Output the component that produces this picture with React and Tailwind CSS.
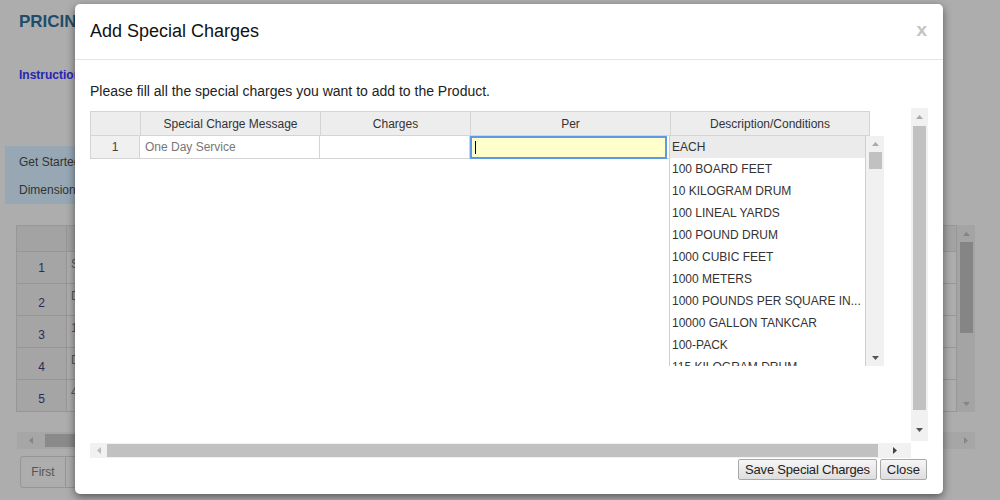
import React from "react";

const Up = ({ c = "#777" }) => (
  <svg width="7" height="4" viewBox="0 0 7 4"><path d="M0 4 L3.5 0 L7 4 Z" fill={c} /></svg>
);
const Down = ({ c = "#555" }) => (
  <svg width="7" height="4" viewBox="0 0 7 4"><path d="M0 0 L3.5 4 L7 0 Z" fill={c} /></svg>
);
const Left = ({ c = "#bbb" }) => (
  <svg width="4" height="7" viewBox="0 0 4 7"><path d="M4 0 L0 3.5 L4 7 Z" fill={c} /></svg>
);
const Right = ({ c = "#444" }) => (
  <svg width="4" height="7" viewBox="0 0 4 7"><path d="M0 0 L4 3.5 L0 7 Z" fill={c} /></svg>
);

const items = [
  "EACH",
  "100 BOARD FEET",
  "10 KILOGRAM DRUM",
  "100 LINEAL YARDS",
  "100 POUND DRUM",
  "1000 CUBIC FEET",
  "1000 METERS",
  "1000 POUNDS PER SQUARE IN...",
  "10000 GALLON TANKCAR",
  "100-PACK",
  "115 KILOGRAM DRUM",
];

const bgRows = [
  ["1", "Same Day Service"],
  ["2", "Delivery"],
  ["3", "1 Hour Service"],
  ["4", "Drop Ship"],
  ["5", "48 Hour Service"],
];

export default function App() {
  return (
    <div
      className="relative w-[1000px] h-[500px] overflow-hidden bg-[#adadad] text-[#333]"
      style={{ fontFamily: '"Liberation Sans", Arial, sans-serif' }}
    >
      {/* Background page (under overlay) */}
      <div className="flex flex-col">
        <div className="pl-[19px] pt-[12px] h-[20px] box-content text-[17px] font-bold text-[#1e4d6b] leading-[20px]">PRICING</div>
        <div className="pl-[19px] mt-[35px] text-[12px] font-bold text-[#2626b3] leading-[16px]">Instructions</div>
        <div className="ml-[5px] mt-[63px] w-[200px] h-[58px] bg-[#97a8b4] flex flex-col text-[12px] text-[#333] pl-[14px]">
          <div className="h-[29px] flex items-center pt-[2px]">Get Started</div>
          <div className="h-[29px] flex items-center">Dimensions</div>
        </div>
        <div className="flex mt-[21px] ml-[16px] w-[959px]">
          <div className="flex-1 border border-[#979797] h-[187px] flex flex-col">
            <div className="flex h-[26px] bg-[#a3a3a3] border-b border-[#979797]">
              <div className="w-[50px] border-r border-[#979797]"></div>
              <div className="flex-1"></div>
            </div>
            {bgRows.map(([n, t], i) => (
              <div key={n} className="flex flex-1 border-b border-[#979797] last:border-b-0">
                <div className={`w-[50px] border-r border-[#979797] bg-[#a5a5a5] flex justify-center text-[12px] text-[#2a2a5a] ${i === 0 ? "items-center" : "items-end pb-[3px]"}`}>{n}</div>
                <div className="flex-1 pl-[4px] pt-[3px] text-[12px] text-[#555]">{t}</div>
              </div>
            ))}
          </div>
          <div className="w-[18px] h-[187px] bg-[#a4a4a4] flex flex-col items-center">
            <div className="h-[17px] flex items-center"><Up c="#858585" /></div>
            <div className="w-[13px] h-[91px] bg-[#858585]"></div>
            <div className="flex-1"></div>
            <div className="h-[17px] flex items-center"><Down c="#858585" /></div>
          </div>
        </div>
        <div className="ml-[17px] mt-[20px] w-[958px] h-[17px] bg-[#a6a6a6] flex items-center">
          <div className="w-[28px] flex justify-center"><Left c="#858585" /></div>
          <div className="h-[13px] w-[120px] bg-[#8a8a8a]"></div>
          <div className="flex-1"></div>
          <div className="w-[18px] flex justify-center"><Right c="#858585" /></div>
        </div>
        <div className="ml-[20px] mt-[7px] flex">
          <div className="w-[46px] h-[32px] border border-[#959595] rounded-l-[3px] flex items-center justify-center text-[12px] text-[#555]">First</div>
          <div className="w-[40px] h-[32px] border border-l-0 border-[#959595]"></div>
        </div>
      </div>

      {/* Modal */}
      <div className="absolute left-[75px] top-[4px] w-[868px] h-[490px] bg-white rounded-[5px] shadow-[0_3px_9px_rgba(0,0,0,0.5)] flex flex-col">
        <div className="h-[56px] flex items-center justify-between px-[15px] border-b border-[#e5e5e5]">
          <div className="text-[18px] text-[#111] leading-[20px] -mt-[2px]">Add Special Charges</div>
          <div className="text-[19px] font-bold text-[#c4c4c4] pr-[1px] leading-[20px] -mt-[4px]">x</div>
        </div>
        <div className="pl-[15px] pr-[15px] flex flex-col">
          <div className="mt-[23px] text-[14px] leading-[16px] text-[#222]">Please fill all the special charges you want to add to the Product.</div>
          <div className="mt-[9px] w-[838px] h-[350px] flex flex-col">
            <div className="flex h-[333px]">
              <div className="w-[821px] pt-[3px] relative">
                <div className="w-[780px] text-[12px]">
                  <div className="flex h-[25px] bg-[#ededed] border border-[#d4d4d4]">
                    <div className="w-[50px] border-r border-[#d4d4d4]"></div>
                    <div className="w-[180px] border-r border-[#d4d4d4] flex items-center justify-center">Special Charge Message</div>
                    <div className="w-[150px] border-r border-[#d4d4d4] flex items-center justify-center">Charges</div>
                    <div className="w-[200px] border-r border-[#d4d4d4] flex items-center justify-center">Per</div>
                    <div className="flex-1 flex items-center justify-center">Description/Conditions</div>
                  </div>
                  <div className="flex h-[23px] border-b border-l border-[#d4d4d4] w-[580px]">
                    <div className="w-[49px] bg-[#f0f0f0] border-r border-[#d4d4d4] flex items-center justify-center text-[#444]">1</div>
                    <div className="w-[180px] border-r border-[#d4d4d4] flex items-center pl-[5px] text-[#777]">One Day Service</div>
                    <div className="w-[150px] border-r border-[#d4d4d4]"></div>
                    <div className="w-[197px] h-[23px] border-2 border-[#5a9ae8] bg-[#ffffcc] flex items-center pl-[3px]">
                      <div className="w-[1px] h-[13px] bg-black"></div>
                    </div>
                  </div>
                </div>
                {/* dropdown list */}
                <div className="absolute left-[579px] top-[28px] w-[215px] h-[230px] flex bg-white">
                  <div className="w-[197px] border-l border-r border-[#cfcfcf] overflow-hidden flex flex-col text-[12px] text-[#333]">
                    {items.map((t, i) => (
                      <div key={t} className={`h-[22px] shrink-0 flex items-center pl-[2px] whitespace-nowrap ${i === 0 ? "bg-[#ebebeb]" : ""}`}>{t}</div>
                    ))}
                  </div>
                  <div className="w-[18px] bg-[#f1f1f1] flex flex-col items-center">
                    <div className="h-[16px] flex items-center"><Up c="#aaa" /></div>
                    <div className="w-[13px] h-[17px] bg-[#c1c1c1]"></div>
                    <div className="flex-1"></div>
                    <div className="h-[16px] flex items-center"><Down c="#555" /></div>
                  </div>
                </div>
              </div>
              <div className="w-[17px] bg-[#f1f1f1] flex flex-col items-center">
                <div className="h-[18px] flex items-center"><Up c="#aaa" /></div>
                <div className="w-[13px] flex-1 bg-[#c1c1c1]"></div>
                <div className="h-[31px] flex items-end pb-[9px]"><Down c="#555" /></div>
              </div>
            </div>
            <div className="flex h-[17px]">
              <div className="w-[821px] h-[15px] mt-[2px] bg-[#f1f1f1] flex items-center">
                <div className="w-[17px] flex justify-center"><Left c="#bbb" /></div>
                <div className="w-[771px] h-[13px] bg-[#c1c1c1]"></div>
                <div className="flex-1 flex justify-center"><Right c="#444" /></div>
              </div>
            </div>
          </div>
          <div className="flex justify-end gap-[3px] mt-[1px] pr-[1px]">
            <button className="h-[21px] px-[6px] text-[13px] text-[#222] border border-[#a9a9a9] rounded-[2px] bg-gradient-to-b from-[#f6f6f6] to-[#dedede] leading-[19px] tracking-[-0.2px]">Save Special Charges</button>
            <button className="h-[21px] px-[6px] text-[13px] text-[#222] border border-[#a9a9a9] rounded-[2px] bg-gradient-to-b from-[#f6f6f6] to-[#dedede] leading-[19px]">Close</button>
          </div>
        </div>
      </div>
    </div>
  );
}
